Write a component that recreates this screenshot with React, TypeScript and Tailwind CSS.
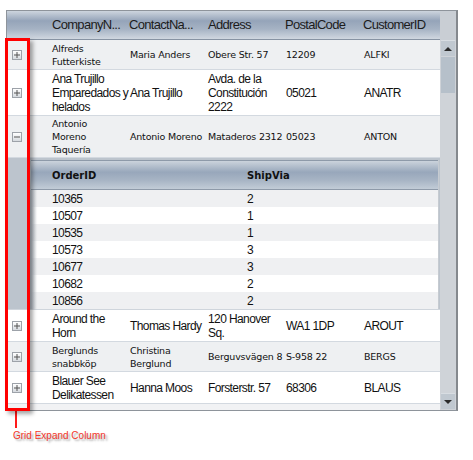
import React from "react";
import clsx from "clsx";

type Customer = {
  company: string;
  contact: string;
  address: string;
  postal: string;
  id: string;
  height: string;
  alt: boolean;
  small: boolean;
  expanded?: boolean;
};

const top: Customer[] = [
  { company: "Alfreds\nFutterkiste", contact: "Maria Anders", address: "Obere Str. 57", postal: "12209", id: "ALFKI", height: "h-[30px]", alt: true, small: true },
  { company: "Ana Trujillo\nEmparedados y\nhelados", contact: "Ana Trujillo", address: "Avda. de la\nConstitución\n2222", postal: "05021", id: "ANATR", height: "h-[46px]", alt: false, small: false },
  { company: "Antonio\nMoreno\nTaquería", contact: "Antonio Moreno", address: "Mataderos 2312", postal: "05023", id: "ANTON", height: "h-[42px]", alt: true, small: true, expanded: true },
];

const bottom: Customer[] = [
  { company: "Around the\nHorn", contact: "Thomas Hardy", address: "120 Hanover\nSq.", postal: "WA1 1DP", id: "AROUT", height: "h-[32px]", alt: false, small: false },
  { company: "Berglunds\nsnabbköp", contact: "Christina\nBerglund", address: "Berguvsvägen 8", postal: "S-958 22", id: "BERGS", height: "h-[30px]", alt: true, small: true },
  { company: "Blauer See\nDelikatessen", contact: "Hanna Moos", address: "Forsterstr. 57", postal: "68306", id: "BLAUS", height: "h-[32px]", alt: false, small: false },
];

const orders = [
  ["10365", "2"],
  ["10507", "1"],
  ["10535", "1"],
  ["10573", "3"],
  ["10677", "3"],
  ["10682", "2"],
  ["10856", "2"],
];

function ExpandBox({ open }: { open?: boolean }) {
  return (
    <div className="w-[10px] h-[10px] border border-[#9da2a9] bg-gradient-to-b from-white to-[#d6dadf] flex items-center justify-center">
      <svg width="6" height="6" viewBox="0 0 6 6">
        <rect x="0" y="2.5" width="6" height="1" fill="#555" />
        {!open && <rect x="2.5" y="0" width="1" height="6" fill="#555" />}
      </svg>
    </div>
  );
}

function Row({ c }: { c: Customer }) {
  return (
    <div
      className={clsx(
        "shrink-0 flex items-center border-b border-[#d3d9e0] text-[#111]",
        c.height,
        c.alt ? "bg-[#eef0f2]" : "bg-white",
        c.small
          ? "font-['DejaVu_Sans',sans-serif] text-[9.5px] leading-[13px] tracking-[-0.2px]"
          : "text-[12px] leading-[14px] tracking-[-0.6px]"
      )}
    >
      <div className="w-[24px] pl-[5px]">
        <ExpandBox open={c.expanded} />
      </div>
      <div className="w-[18px]" />
      <div className="w-[78px] pl-[3px] whitespace-pre">{c.company}</div>
      <div className="w-[78px] pl-[3px] whitespace-pre">{c.contact}</div>
      <div className="w-[78px] pl-[3px] whitespace-pre">{c.address}</div>
      <div className="w-[78px] pl-[3px] whitespace-pre">{c.postal}</div>
      <div className="w-[79px] pl-[3px]">{c.id}</div>
    </div>
  );
}

function ScrollButton({ up }: { up?: boolean }) {
  return (
    <div className="h-[16px] mx-[1px] bg-[#c0c8d0] border-t border-[#d8dde2] flex items-center justify-center">
      <svg width="8" height="4" viewBox="0 0 8 4">
        {up ? <polygon points="0,4 8,4 4,0" fill="#2b2b2b" /> : <polygon points="0,0 8,0 4,4" fill="#2b2b2b" />}
      </svg>
    </div>
  );
}

export default function App() {
  return (
    <div className="relative w-[473px] h-[460px] bg-white font-['Liberation_Sans',sans-serif] overflow-hidden">
      <div className="ml-[6px] mt-[10px] w-[452px] h-[401px] flex border border-r-2 border-[#8e949b] border-r-[#85898e]">
        <div className="w-[433px] flex flex-col overflow-hidden">
          <div className="h-[29px] shrink-0 flex items-center border-b border-[#8793a3] bg-[linear-gradient(to_bottom,#cdd5de_0%,#95a4b9_35%,#a6b3c4_65%,#d0d7e0_100%)] text-[13px] tracking-[-0.7px] text-[#1c1c1c]">
            <div className="w-[42px]" />
            <div className="w-[78px] pl-[3px] whitespace-nowrap overflow-hidden">CompanyN...</div>
            <div className="w-[78px] pl-[2px] whitespace-nowrap overflow-hidden">ContactNa...</div>
            <div className="w-[78px] pl-[3px]">Address</div>
            <div className="w-[78px] pl-[2px]">PostalCode</div>
            <div className="w-[79px] pl-[2px]">CustomerID</div>
          </div>

          {top.map((c) => (
            <Row key={c.id} c={c} />
          ))}

          <div className="h-[152px] shrink-0 flex bg-[#bcc4cd] border-b border-[#cfd5dc]">
            <div className="w-[24px]" />
            <div className="relative mt-[2px] w-[408px] flex flex-col border-r border-[#c6cbd1]">
              <div className="h-[30px] shrink-0 flex items-center border-t border-[#7f8b9b] border-b border-[#8e9aa9] bg-[linear-gradient(to_bottom,#cbd3dc_0%,#98a7bb_40%,#a8b5c5_70%,#c2ccd7_100%)] font-['DejaVu_Sans',sans-serif] font-bold text-[10px] text-[#111]">
                <div className="w-[195px] pl-[21px]">OrderID</div>
                <div className="pl-[21px]">ShipVia</div>
              </div>
              {orders.map(([id, ship], i) => (
                <div
                  key={id}
                  className={clsx(
                    "h-[17px] shrink-0 flex items-center text-[12px] tracking-[-0.6px] text-[#111]",
                    i % 2 === 0 ? "bg-[#eff0f2]" : "bg-white"
                  )}
                >
                  <div className="w-[195px] pl-[21px]">{id}</div>
                  <div className="pl-[21px]">{ship}</div>
                </div>
              ))}
              <div className="absolute left-0 top-[30px] bottom-0 w-[6px] bg-gradient-to-r from-[#b9c1ca] to-transparent" />
            </div>
          </div>

          {bottom.map((c) => (
            <Row key={c.id} c={c} />
          ))}

          <div className="h-[30px] shrink-0 flex items-start pt-[4px] bg-[#f1f2f4] text-[12px] tracking-[-0.6px] leading-[14px] text-[#111]">
            <div className="w-[42px]" />
            <div className="w-[78px] pl-[3px] whitespace-nowrap overflow-hidden">Blondesddsl</div>
            <div className="w-[78px] pl-[3px] whitespace-nowrap overflow-hidden">Frédérique</div>
            <div className="w-[78px] pl-[3px]">24, place</div>
          </div>
        </div>

        <div className="w-[16px] flex flex-col bg-[#cfd3d8]">
          <div className="h-[29px] bg-[#c9ced4]" />
          <ScrollButton up />
          <div className="h-[36px] mx-[1px] mt-[1px] bg-[#b6c0ca]" />
          <div className="flex-1" />
          <ScrollButton />
          <div className="h-[1px]" />
        </div>
      </div>

      <div className="ml-[15px] w-[2px] h-[17px] bg-[#ff1a1a]" />
      <div className="ml-[13px] mt-[2px] text-[10px] leading-[12px] text-[#f2372b] [text-shadow:2px_2px_2px_rgba(0,0,0,0.35)]">
        Grid Expand Column
      </div>

      <div className="absolute left-[5px] top-[38px] w-[25px] h-[373px] border-[3px] border-[#ff0000] shadow-[3px_3px_4px_rgba(0,0,0,0.35)]" />
    </div>
  );
}
